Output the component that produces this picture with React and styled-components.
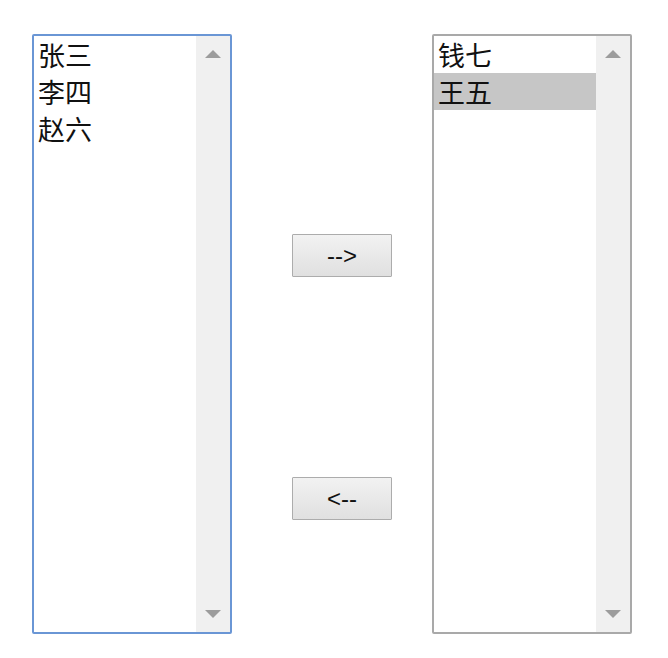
import React, { useState } from "react";
import styled, { createGlobalStyle } from "styled-components";

const Global = createGlobalStyle`
  body {
    margin: 0;
    background: #fff;
    font-family: "Liberation Sans", "Noto Sans CJK SC", sans-serif;
  }
`;

const Page = styled.div`
  display: flex;
  align-items: flex-start;
  padding: 34px 0 0 32px;
`;

const ListBox = styled.div`
  box-sizing: border-box;
  width: 200px;
  height: 600px;
  border: 2px solid ${(p) => (p.$focused ? "#6a96d5" : "#a9a9a9")};
  border-radius: 2px;
  display: flex;
  background: #fff;
`;

const Items = styled.ul`
  flex: 1;
  list-style: none;
  margin: 0;
  padding: 0;
`;

const Item = styled.li`
  height: 37px;
  line-height: 37px;
  padding-left: 4px;
  font-family: "Noto Sans CJK SC", "Microsoft YaHei", sans-serif;
  font-size: 27px;
  color: #111;
  background: ${(p) => (p.$selected ? "#c6c6c6" : "transparent")};
  cursor: default;
`;

const Track = styled.div`
  width: 34px;
  background: #f0f0f0;
  display: flex;
  flex-direction: column;
  justify-content: space-between;
  align-items: center;
  padding: 14px 0;
`;

const Arrow = styled.div`
  width: 0;
  height: 0;
  border-left: 8px solid transparent;
  border-right: 8px solid transparent;
  ${(p) =>
    p.$down
      ? "border-top: 8px solid #9c9c9c;"
      : "border-bottom: 8px solid #9c9c9c;"}
`;

const Middle = styled.div`
  display: flex;
  flex-direction: column;
  gap: 200px;
  padding-top: 200px;
  margin: 0 40px 0 60px;
`;

const MoveButton = styled.button`
  box-sizing: border-box;
  width: 100px;
  height: 43px;
  border: 1px solid #acacac;
  border-radius: 1px;
  background: linear-gradient(#f2f2f2, #e0e0e0);
  font-family: "Liberation Sans", sans-serif;
  font-size: 24px;
  color: #111;
  padding: 0;
`;

function List({ items, selected, focused }) {
  return (
    <ListBox $focused={focused}>
      <Items>
        {items.map((name) => (
          <Item key={name} $selected={name === selected}>
            {name}
          </Item>
        ))}
      </Items>
      <Track>
        <Arrow />
        <Arrow $down />
      </Track>
    </ListBox>
  );
}

export default function App() {
  const [left] = useState(["张三", "李四", "赵六"]);
  const [right] = useState(["钱七", "王五"]);
  return (
    <>
      <Global />
      <Page>
        <List items={left} focused />
        <Middle>
          <MoveButton>--&gt;</MoveButton>
          <MoveButton>&lt;--</MoveButton>
        </Middle>
        <List items={right} selected="王五" />
      </Page>
    </>
  );
}
